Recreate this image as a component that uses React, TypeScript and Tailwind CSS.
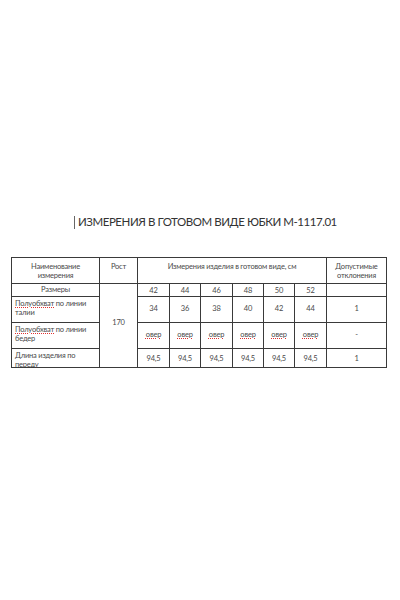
const font = { fontFamily: "Lato, 'Noto Sans', sans-serif" };

const Cell = ({ className = "", children }: { className?: string; children?: React.ReactNode }) => (
  <div className={`bg-white ${className}`}>{children}</div>
);

const Wavy = ({ children }: { children: React.ReactNode }) => (
  <span className="underline decoration-dotted decoration-[#e03030] decoration-[1px] underline-offset-[1px]">{children}</span>
);

export default function App() {
  const sizes = ["42", "44", "46", "48", "50", "52"];
  const waist = ["34", "36", "38", "40", "42", "44"];

  return (
    <div className="w-[400px] h-[600px] bg-white text-[#4a4a4a]" style={font}>
      {/* title */}
      <div className="pt-[214px] pl-[74px] flex items-center h-[230px]">
        <div className="w-px h-[13px] bg-[#666] mr-[3px]" />
        <span className="text-[11.5px] text-[#333] tracking-[-0.45px]">ИЗМЕРЕНИЯ В ГОТОВОМ ВИДЕ ЮБКИ М-1117.01</span>
      </div>

      {/* table */}
      <div className="mt-[27px] ml-[11px] w-fit">
        <div className="grid grid-cols-[87px_37px_31px_30px_31px_30px_30px_31px_59px] grid-rows-[25px_12px_25px_25px_18px] gap-px p-px bg-[#3a3a3a] text-[7.5px] leading-[9px] tracking-[-0.2px]">
          <Cell className="text-center pt-[4px]">Наименование<br />измерения</Cell>
          <Cell className="text-center pt-[4px]">Рост</Cell>
          <Cell className="col-span-6 text-center pt-[4px]">Измерения изделия в готовом виде, см</Cell>
          <Cell className="text-center pt-[4px]">Допустимые<br />отклонения</Cell>

          <Cell className="text-center pt-[1px]">Размеры</Cell>
          <Cell className="row-span-4 flex items-center justify-center pb-[6px]">170</Cell>
          {sizes.map((s) => (
            <Cell key={s} className="text-center pt-[2px]">{s}</Cell>
          ))}
          <Cell />

          <Cell className="pl-[3px] pt-[2px]"><Wavy>Полуобхват</Wavy> по линии<br />талии</Cell>
          {waist.map((s, i) => (
            <Cell key={i} className="flex items-center justify-center pb-[2px]">{s}</Cell>
          ))}
          <Cell className="flex items-center justify-center pb-[2px]">1</Cell>

          <Cell className="pl-[3px] pt-[2px]"><Wavy>Полуобхват</Wavy> по линии<br />бедер</Cell>
          {sizes.map((s) => (
            <Cell key={s} className="flex items-center justify-center pb-[2px]"><Wavy>овер</Wavy></Cell>
          ))}
          <Cell className="flex items-center justify-center pb-[2px]">-</Cell>

          <Cell className="pl-[3px] pt-[2px]">Длина изделия по<br />переду</Cell>
          {sizes.map((s) => (
            <Cell key={s} className="flex items-center justify-center">94,5</Cell>
          ))}
          <Cell className="flex items-center justify-center">1</Cell>
        </div>
      </div>
    </div>
  );
}
